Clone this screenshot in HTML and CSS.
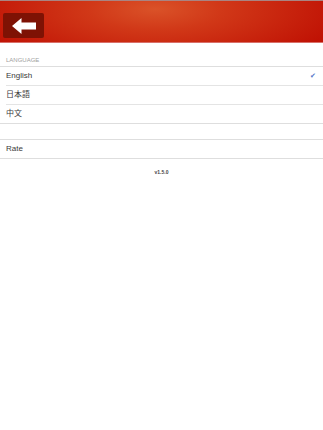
FILE: index.html
```html
<!DOCTYPE html>
<html lang="en">
<head>
    <meta charset="UTF-8">
    <meta name="viewport" content="width=device-width, initial-scale=1.0">
    <title>Settings</title>
    <link rel="stylesheet" href="styles.css">
</head>
<body>
    <header class="topbar">
        <button class="back" aria-label="Back">
            <svg width="24" height="16" viewBox="0 0 24 16">
                <path d="M0 8 L9.5 0 L9.5 4.5 L24 4.5 L24 11.5 L9.5 11.5 L9.5 16 Z" fill="#fff"/>
            </svg>
        </button>
    </header>

    <div class="section-title">LANGUAGE</div>
    <ul class="group">
        <li class="row">English <span class="check">&#10004;</span></li>
        <li class="row">日本語</li>
        <li class="row">中文</li>
    </ul>

    <ul class="group rate">
        <li class="row">Rate</li>
    </ul>

    <p class="version">v1.5.0</p>
</body>
</html>
```

FILE: styles.css
```css
body {
    margin: 0;
    font-family: "Liberation Sans", Arial, "Noto Sans CJK JP", sans-serif;
    background-color: #fff;
    color: #3a3a3a;
}

.topbar {
    height: 41px;
    border-top: 1px solid #a98482;
    border-bottom: 1px solid #d8706a;
    background-color: #c01204;
    background-image: radial-gradient(ellipse 190px 60px at 48% 20%, #da5228 0%, rgba(216, 72, 32, 0.7) 35%, rgba(192, 18, 4, 0) 100%);
    display: flex;
    align-items: center;
    padding-left: 3px;
}

.back {
    width: 41px;
    height: 25px;
    margin-top: 8px;
    border: none;
    border-radius: 2px;
    background-color: #7e1204;
    display: flex;
    justify-content: center;
    align-items: center;
    padding: 0;
}

.section-title {
    font-size: 6px;
    color: #a0a0a0;
    padding: 14px 0 3px 6px;
}

.group {
    list-style: none;
    margin: 0;
    padding: 0;
    border-top: 1px solid #dedede;
    border-bottom: 1px solid #dedede;
}

.row {
    height: 18px;
    line-height: 18px;
    font-size: 8px;
    margin-left: 6px;
    padding-right: 7px;
    display: flex;
    justify-content: space-between;
}

.row + .row {
    border-top: 1px solid #e4e4e4;
}

.check {
    color: #5577c8;
    font-size: 7px;
}

.rate {
    margin-top: 15px;
}

.version {
    margin: 10px 0 0 0;
    text-align: center;
    font-size: 5px;
    font-weight: bold;
    color: #444;
}
```
